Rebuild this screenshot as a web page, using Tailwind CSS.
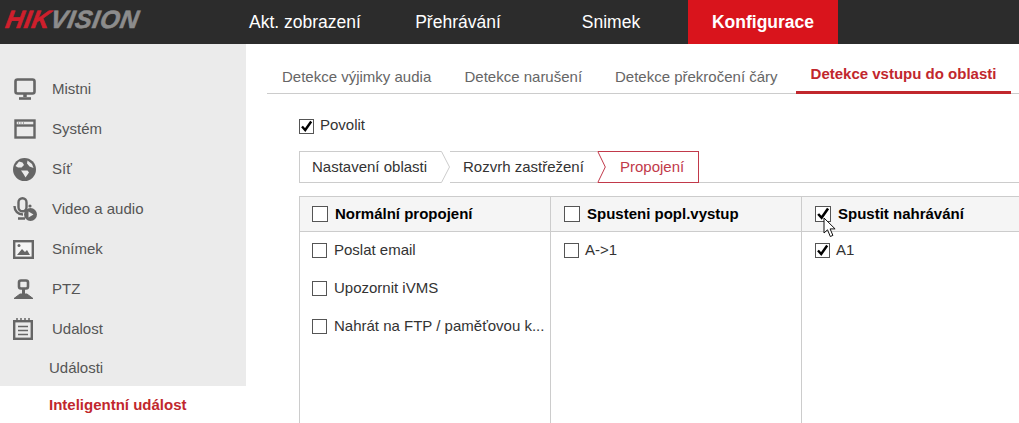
<!DOCTYPE html>
<html lang="cs">
<head>
    <meta charset="UTF-8">
    <title>Konfigurace</title>
    <script src="https://cdn.jsdelivr.net/npm/@tailwindcss/browser@4"></script>
</head>
<body class="h-[423px] w-[1019px] overflow-hidden bg-white font-['Liberation_Sans',sans-serif]">
    <!-- top bar -->
    <header class="flex h-[44px] bg-[#2c2c2c]">
        <div class="w-[230px] pl-[6px] pt-[4px] text-[25px] leading-[30px] font-bold italic">
            <div class="w-fit origin-left -skew-x-[10deg] tracking-[0.6px] [-webkit-text-stroke:0.6px_currentColor]"><span class="text-[#cf1f2c]">HIK</span><span class="text-[#8c8c8c]">VISION</span></div>
        </div>
        <nav class="flex gap-[3px] text-[17.5px] text-white">
            <a class="flex w-[150px] items-center justify-center">Akt. zobrazení</a>
            <a class="flex w-[150px] items-center justify-center">Přehrávání</a>
            <a class="flex w-[150px] items-center justify-center">Snimek</a>
            <a class="-ml-[1px] flex w-[150px] items-center justify-center bg-[#d9141c] font-bold">Konfigurace</a>
        </nav>
    </header>

    <div class="flex">
        <!-- side menu -->
        <aside class="h-[379px] w-[246px] shrink-0">
            <div class="h-[342px] bg-[#ebebeb] pt-[25px] text-[15px] text-[#555]">
                <div class="flex h-[40px] items-center">
                    <svg class="ml-[14px] mr-[16px] h-[22px] w-[22px]" viewBox="0 0 22 22" fill="none" stroke="#666"><rect x="1.500" y="1.500" width="19" height="14" rx="2" stroke-width="2.600"/><path d="M11 16v3" stroke-width="3.500"/><path d="M5 20.500h12" stroke-width="2.600"/></svg>
                    <span>Mistni</span>
                </div>
                <div class="flex h-[40px] items-center">
                    <svg class="ml-[14px] mr-[16px] h-[22px] w-[22px]" viewBox="0 0 22 22" fill="none" stroke="#666"><rect x="1.500" y="2.500" width="19" height="17" stroke-width="2.400"/><path d="M1 7.500h20" stroke-width="2.400"/><path d="M4 5h1M6.500 5h1M9 5h1" stroke-width="1"/></svg>
                    <span>Systém</span>
                </div>
                <div class="flex h-[40px] items-center">
                    <svg class="ml-[13px] mr-[16px] h-[23px] w-[23px]" viewBox="0 0 23 23"><circle cx="11.500" cy="11.500" r="11.500" fill="#666"/><path d="M2.500 8l3.500-4.500 3.500 1 1.500 2.500-2.500 2.500H5zM8 12.500h6.500l1.500 2-3.500 5-2-3.500zM14.500 2.500l4.500 3.500 1.500 4-4-1.500-2.500-3z" fill="#ebebeb"/></svg>
                    <span>Síť</span>
                </div>
                <div class="flex h-[40px] items-center">
                    <svg class="ml-[13px] mr-[15px] h-[24px] w-[24px]" viewBox="0 0 24 24"><rect x="5.500" y="1.200" width="8" height="13" rx="4" fill="none" stroke="#666" stroke-width="2.400"/><path d="M1.500 9c0 5 3.500 8.500 8.500 8.500M5 21.500h7" fill="none" stroke="#666" stroke-width="2.400"/><circle cx="17" cy="9" r="1.600" fill="#666"/><circle cx="17.500" cy="17.500" r="6.500" fill="#666"/><path d="M15.500 14.500l5 3-5 3z" fill="#ebebeb"/></svg>
                    <span>Video a audio</span>
                </div>
                <div class="flex h-[40px] items-center">
                    <svg class="ml-[13px] mr-[18px] h-[21px] w-[21px]" viewBox="0 0 21 21"><rect x="1.200" y="2.200" width="18.600" height="16.600" fill="#f4f4f4" stroke="#666" stroke-width="2.400"/><path d="M4 16l5-6 3 3 2-2 3 5z" fill="#666"/><circle cx="6" cy="6.500" r="1.500" fill="#666"/></svg>
                    <span>Snímek</span>
                </div>
                <div class="flex h-[40px] items-center">
                    <svg class="ml-[13px] mr-[18px] h-[21px] w-[21px]" viewBox="0 0 21 21" fill="none" stroke="#666"><rect x="6" y="1.500" width="9" height="8" rx="2" stroke-width="2.600"/><path d="M10.500 10v5" stroke-width="3"/><path d="M1 19.500l6-4.500h7l6 4.500z" fill="#666" stroke-width="1"/></svg>
                    <span>PTZ</span>
                </div>
                <div class="flex h-[40px] items-center">
                    <svg class="ml-[13px] mr-[19px] h-[22px] w-[20px]" viewBox="0 0 20 22" fill="none" stroke="#666"><rect x="1.200" y="3.200" width="17.600" height="17.600" stroke-width="2.400"/><path d="M4 0v4M8 0v4M12 0v4M16 0v4" stroke-width="1.500"/><path d="M5 8.500h10M5 12.500h10M5 16.500h10" stroke-width="1.500"/></svg>
                    <span>Udalost</span>
                </div>
                <div class="flex h-[38px] items-center pl-[49px]">Události</div>
            </div>
            <div class="flex h-[39px] items-center pl-[49px] text-[15px] font-bold text-[#c1272d]">Inteligentní událost</div>
        </aside>

        <main class="min-w-0 flex-1 pl-[21px]">
            <!-- tabs -->
            <div class="flex h-[50px] items-end border-b border-[#ccc] pl-[15px] text-[15px] text-[#666]">
                <div class="w-[182.5px] pb-[5px]">Detekce výjimky audia</div>
                <div class="w-[150.5px] pb-[5px]">Detekce narušení</div>
                <div class="w-[181px] pb-[5px]">Detekce překročení čáry</div>
                <div class="mb-[-1px] flex h-[32px] w-[215px] justify-center border-b-[3px] border-[#c1272d] pt-[1px] font-bold text-[#c1272d]">Detekce vstupu do oblasti</div>
            </div>

            <div class="pl-[32px]">
                <!-- enable -->
                <div class="mt-[25px] flex h-[15px] items-center gap-[6px] text-[15px] text-[#333]">
                    <div class="flex h-[15px] w-[15px] items-center justify-center border border-[#555]">
                        <svg class="h-[13px] w-[13px]" viewBox="0 0 13 13" fill="none" stroke="#000" stroke-width="2.400"><path d="M2 6.500l3.200 3.500 6-8.500"/></svg>
                    </div>
                    <span class="-mt-[2px]">Povolit</span>
                </div>

                <!-- steps -->
                <div class="mt-[17px] flex h-[32px] text-[15px]">
                    <div class="flex w-[142px] items-center border-y border-l border-[#ccc] pl-[12px] text-[#333]">Nastavení oblasti</div>
                    <svg class="h-[32px] w-[9px] shrink-0" viewBox="0 0 9 32" fill="none"><path d="M0 .5h.5l8 15.500-8 15.500H0" stroke="#ccc"/></svg>
                    <div class="flex w-[147px] items-center border-y border-[#ccc] pl-[13px] text-[#333]">Rozvrh zastřežení</div>
                    <svg class="h-[32px] w-[9px] shrink-0" viewBox="0 0 9 32" fill="none"><path d="M9 .5H.8l7.500 15.500-7.500 15.500H9" stroke="#c1394a"/></svg>
                    <div class="flex w-[93px] items-center border-y border-r border-[#c1394a] pl-[14px] text-[#c1394a]">Propojení</div>
                    <div class="flex-1 border-b border-[#ccc]"></div>
                </div>

                <!-- linkage table -->
                <div class="mt-[13px] grid grid-cols-[251px_251px_251px] border-l border-[#ccc] text-[15px] text-[#333]">
                    <div class="border-r border-[#ccc]">
                        <div class="flex h-[36px] items-center gap-[7px] border-y border-[#ccc] bg-[#f5f5f5] pl-[12px] font-bold text-black">
                            <div class="h-[16px] w-[16px] shrink-0 border border-[#555] bg-white"></div>
                            <span>Normální propojení</span>
                        </div>
                        <div class="h-[191px] pl-[12px] pt-[9px]">
                            <div class="flex h-[18px] items-center gap-[7px]">
                                <div class="h-[15px] w-[15px] shrink-0 border border-[#555]"></div>
                                <span>Poslat email</span>
                            </div>
                            <div class="mt-[20px] flex h-[18px] items-center gap-[7px]">
                                <div class="h-[15px] w-[15px] shrink-0 border border-[#555]"></div>
                                <span>Upozornit iVMS</span>
                            </div>
                            <div class="mt-[20px] flex h-[18px] items-center gap-[7px]">
                                <div class="h-[15px] w-[15px] shrink-0 border border-[#555]"></div>
                                <span class="whitespace-nowrap">Nahrát na FTP / paměťovou k...</span>
                            </div>
                        </div>
                    </div>
                    <div class="border-r border-[#ccc]">
                        <div class="flex h-[36px] items-center gap-[7px] border-y border-[#ccc] bg-[#f5f5f5] pl-[13px] font-bold text-black">
                            <div class="h-[16px] w-[16px] shrink-0 border border-[#555] bg-white"></div>
                            <span>Spusteni popl.vystup</span>
                        </div>
                        <div class="pl-[13px] pt-[9px]">
                            <div class="flex h-[18px] items-center gap-[6px]">
                                <div class="h-[15px] w-[15px] shrink-0 border border-[#555]"></div>
                                <span>A-&gt;1</span>
                            </div>
                        </div>
                    </div>
                    <div>
                        <div class="relative flex h-[36px] items-center gap-[7px] border-y border-[#ccc] bg-[#f5f5f5] pl-[13px] font-bold text-black">
                            <div class="flex h-[16px] w-[16px] shrink-0 items-center justify-center border border-[#555] bg-white">
                                <svg class="h-[14px] w-[14px]" viewBox="0 0 13 13" fill="none" stroke="#000" stroke-width="2.400"><path d="M2 6.500l3.200 3.500 6-8.500"/></svg>
                            </div>
                            <span>Spustit nahrávání</span>
                            <!-- mouse pointer -->
                            <svg class="absolute left-[21px] top-[20px] h-[21px] w-[14px]" viewBox="0 0 14 21"><path d="M1 1v15l3.500-3.200 2.800 6.700 2.600-1.100-2.800-6.500h5z" fill="#fff" stroke="#111" stroke-width="1"/></svg>
                        </div>
                        <div class="pl-[13px] pt-[9px]">
                            <div class="flex h-[18px] items-center gap-[6px]">
                                <div class="flex h-[15px] w-[15px] shrink-0 items-center justify-center border border-[#555]">
                                    <svg class="h-[13px] w-[13px]" viewBox="0 0 13 13" fill="none" stroke="#000" stroke-width="2.400"><path d="M2 6.500l3.200 3.500 6-8.500"/></svg>
                                </div>
                                <span>A1</span>
                            </div>
                        </div>
                    </div>
                </div>
            </div>
        </main>
    </div>
</body>
</html>
